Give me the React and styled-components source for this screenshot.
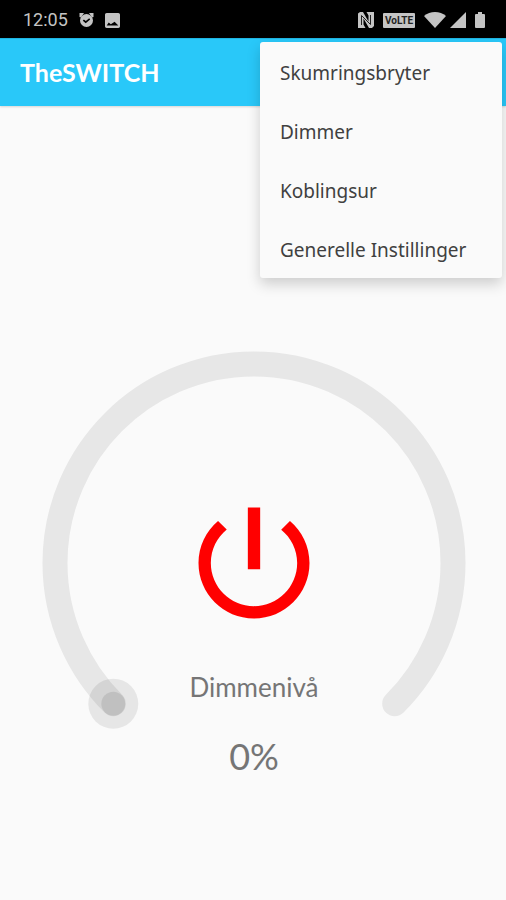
import React, { useState } from "react";
import styled, { createGlobalStyle } from "styled-components";

const colours = {
  primary: "#29c8f9",
  primaryEdge: "#1fb5e2",
  surface: "#fafafa",
  track: "#e7e7e7",
  status: "#c4c4c4",
  text: "#404040",
  muted: "#757575",
  power: "#ff0000",
};

const GlobalStyle = createGlobalStyle`
  * {
    box-sizing: border-box;
  }
  body {
    margin: 0;
    background: ${colours.surface};
    font-family: Lato, "Open Sans", sans-serif;
  }
`;

const Screen = styled.div`
  position: relative;
  display: flex;
  flex-direction: column;
  min-height: 100vh;
`;

const StatusBar = styled.div`
  display: flex;
  align-items: center;
  justify-content: space-between;
  height: 38px;
  padding: 2px 21px 0 23px;
  background: #000;
  color: ${colours.status};
`;

const StatusGroup = styled.div`
  display: flex;
  align-items: center;
  gap: ${(props) => props.$gap}px;

  svg {
    display: block;
    fill: currentColor;
  }
`;

const Clock = styled.time`
  font-family: Roboto, sans-serif;
  font-size: 18px;
  line-height: 20px;
`;

const Badge = styled.span`
  width: 32px;
  border-radius: 1px;
  background: ${colours.status};
  color: #222;
  font-family: Roboto, sans-serif;
  font-size: 10px;
  font-weight: 700;
  line-height: 15px;
  text-align: center;
`;

const Toolbar = styled.header`
  display: flex;
  align-items: center;
  height: 68px;
  padding: 0 20px 2px;
  border-top: 1px solid ${colours.primaryEdge};
  background: ${colours.primary};
  box-shadow: 0 1px 2px rgba(0, 0, 0, 0.15);
`;

const Title = styled.h1`
  margin: 0;
  color: #fff;
  font-size: 25px;
  font-weight: 700;
  line-height: 32px;
`;

const Menu = styled.nav`
  position: absolute;
  top: 42px;
  right: 4px;
  z-index: 1;
  display: flex;
  flex-direction: column;
  width: 242px;
  border-radius: 3px;
  background: ${colours.surface};
  box-shadow: 0 6px 14px rgba(0, 0, 0, 0.18);
`;

const MenuItem = styled.button`
  height: 59px;
  padding: 2px 20px 0;
  border: 0;
  background: none;
  color: ${colours.text};
  font-family: "Noto Sans", sans-serif;
  font-size: 19px;
  text-align: left;
  cursor: pointer;
`;

const Content = styled.main`
  display: flex;
  flex: 1;
  justify-content: center;
  align-items: flex-start;
  padding: 246px 41px 40px 43px;
`;

const Dial = styled.div`
  display: grid;
  width: 100%;
  max-width: 520px;

  > * {
    grid-area: 1 / 1;
  }
`;

const DialTrack = styled.svg`
  display: block;
  width: 100%;
  overflow: visible;
`;

const DialRange = styled.input`
  width: 100%;
  height: 100%;
  margin: 0;
  opacity: 0;
  cursor: pointer;
`;

const PowerButton = styled.button`
  place-self: center;
  padding: 0;
  border: 0;
  background: none;
  color: ${colours.power};
  cursor: pointer;

  svg {
    display: block;
    fill: currentColor;
  }
`;

const Reading = styled.div`
  display: flex;
  flex-direction: column;
  align-items: center;
  align-self: end;
  gap: 35px;
  color: ${colours.muted};
  pointer-events: none;
`;

const ReadingLabel = styled.label`
  font-size: 26px;
  line-height: 32px;
`;

const ReadingValue = styled.output`
  font-size: 36px;
  line-height: 36px;
`;

const menuItems = [
  "Skumringsbryter",
  "Dimmer",
  "Koblingsur",
  "Generelle Instillinger",
];

const AlarmIcon = () => (
  <svg width="15" height="16" viewBox="0 0 15 16" aria-hidden="true">
    <path d="M0.500 1 5 1 2 5.500 0.500 5zM14.500 1 10 1 13 5.500 14.500 5z" />
    <path
      fillRule="evenodd"
      d="M7.500 2a6.500 6.500 0 1 1 0 13 6.500 6.500 0 0 1 0-13zM3.800 8.800l2.900 2.400 4.500-3.800-1-1.200-3.400 2.900-1.900-1.500z"
    />
  </svg>
);

const ImageIcon = () => (
  <svg width="15" height="15" viewBox="3 3 18 18" aria-hidden="true">
    <path d="M21 19V5c0-1.100-.9-2-2-2H5c-1.100 0-2 .9-2 2v14c0 1.100.9 2 2 2h14c1.100 0 2-.9 2-2zM7.500 14.500l2.500 2L14.500 13.500l4.500 4.500H5l2.500-3.500z" />
  </svg>
);

const NfcIcon = () => (
  <svg width="16" height="16" viewBox="0 0 16 16" aria-hidden="true">
    <path d="M0 1.500 2 0h3l5.500 9.500V3.500L8.500 0H16v14l-2 2h-3L5.500 6.500v6L7.500 16H0z" />
    <path
      d="M3.500 13V3.500L12.500 12.500V3"
      fill="none"
      stroke="#222"
      strokeWidth="1"
    />
  </svg>
);

const WifiIcon = () => (
  <svg width="22" height="16" viewBox="0 0 22 16" aria-hidden="true">
    <path d="M11 16 0 4C6-1.300 16-1.300 22 4z" />
  </svg>
);

const SignalIcon = () => (
  <svg width="16" height="16" viewBox="0 0 16 16" aria-hidden="true">
    <path d="M16 0v16H0z" />
  </svg>
);

const BatteryIcon = () => (
  <svg width="10" height="16" viewBox="0 0 10 16" aria-hidden="true">
    <path d="M3 0h4v2h2q1 0 1 1v12q0 1-1 1H1q-1 0-1-1V3q0-1 1-1h2z" />
  </svg>
);

const PowerIcon = () => (
  <svg width="148" height="148" viewBox="0 0 24 24" aria-hidden="true">
    <path d="M13 3h-2v10h2V3zm4.830 2.170l-1.420 1.420C17.990 7.860 19 9.810 19 12c0 3.870-3.130 7-7 7s-7-3.130-7-7c0-2.190 1.010-4.140 2.580-5.420L6.170 5.170C4.230 6.820 3 9.260 3 12c0 4.970 4.030 9 9 9s9-4.030 9-9c0-2.740-1.230-5.180-3.170-6.830z" />
  </svg>
);

const DimmerDial = () => {
  const [level, setLevel] = useState(0);
  const [on, setOn] = useState(false);

  // 0% sits bottom left, 100% bottom right, 270 degrees apart
  const angle = ((135 + level * 2.7) * Math.PI) / 180;
  const x = 211 + 199 * Math.cos(angle);
  const y = 211 + 199 * Math.sin(angle);

  return (
    <Dial>
      <DialTrack viewBox="0 0 422 422" aria-hidden="true">
        <path
          d="M70.300 351.700A199 199 0 1 1 351.700 351.700"
          fill="none"
          stroke={colours.track}
          strokeWidth="25"
          strokeLinecap="round"
        />
        <circle cx={x} cy={y} r="25" fill="#000" fillOpacity="0.08" />
        <circle cx={x} cy={y} r="12" fill="#000" fillOpacity="0.09" />
      </DialTrack>
      <DialRange
        id="level"
        type="range"
        min="0"
        max="100"
        value={level}
        onChange={(e) => setLevel(Number(e.target.value))}
      />
      <PowerButton
        type="button"
        aria-label="Av/på"
        aria-pressed={on}
        onClick={() => setOn(!on)}
      >
        <PowerIcon />
      </PowerButton>
      <Reading>
        <ReadingLabel htmlFor="level">Dimmenivå</ReadingLabel>
        <ReadingValue htmlFor="level">{level}%</ReadingValue>
      </Reading>
    </Dial>
  );
};

const App = () => {
  return (
    <>
      <GlobalStyle />
      <Screen>
        <StatusBar>
          <StatusGroup $gap={11}>
            <Clock>12:05</Clock>
            <AlarmIcon />
            <ImageIcon />
          </StatusGroup>
          <StatusGroup $gap={9}>
            <NfcIcon />
            <Badge>VoLTE</Badge>
            <StatusGroup $gap={4}>
              <WifiIcon />
              <SignalIcon />
            </StatusGroup>
            <BatteryIcon />
          </StatusGroup>
        </StatusBar>
        <Toolbar>
          <Title>TheSWITCH</Title>
        </Toolbar>
        <Menu>
          {menuItems.map((item) => (
            <MenuItem key={item} type="button">
              {item}
            </MenuItem>
          ))}
        </Menu>
        <Content>
          <DimmerDial />
        </Content>
      </Screen>
    </>
  );
};

export default App;
